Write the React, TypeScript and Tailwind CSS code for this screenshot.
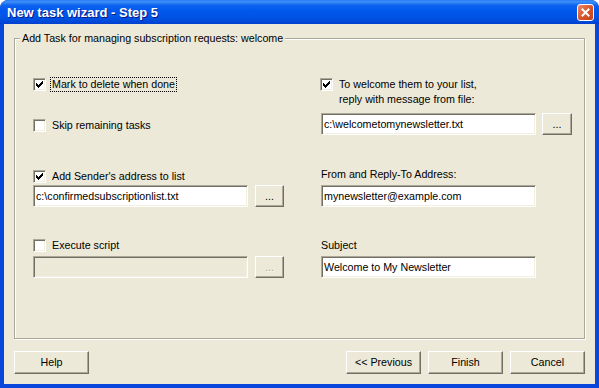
import React from 'react';

const font = "font-['Liberation_Sans',Arial,sans-serif]";

const CheckMark: React.FC = () => (
  <svg width="7" height="7" viewBox="0 0 7 7" shapeRendering="crispEdges" className="block">
    <rect x="6" y="0" width="1" height="1" fill="#000" />
    <rect x="5" y="1" width="2" height="1" fill="#000" />
    <rect x="0" y="2" width="1" height="1" fill="#000" />
    <rect x="4" y="2" width="3" height="1" fill="#000" />
    <rect x="0" y="3" width="2" height="1" fill="#000" />
    <rect x="3" y="3" width="3" height="1" fill="#000" />
    <rect x="0" y="4" width="5" height="1" fill="#000" />
    <rect x="1" y="5" width="3" height="1" fill="#000" />
    <rect x="2" y="6" width="1" height="1" fill="#000" />
  </svg>
);

const CheckBox: React.FC<{ checked?: boolean }> = ({ checked }) => (
  <span className="flex items-center justify-center w-[13px] h-[13px] shrink-0 bg-white border border-t-[#aca899] border-l-[#aca899] border-b-white border-r-white shadow-[inset_1px_1px_0_#716f64,inset_-1px_-1px_0_#f1efe2]">
    {checked && <CheckMark />}
  </span>
);

const TextBox: React.FC<{ value?: string; disabled?: boolean }> = ({ value, disabled }) => (
  <div
    className={`w-[215px] h-[22px] flex items-center pl-[2px] border border-t-[#aca899] border-l-[#aca899] border-b-white border-r-white shadow-[inset_1px_1px_0_#716f64,inset_-1px_-1px_0_#f1efe2] ${
      disabled ? 'bg-[#ece9d8]' : 'bg-white'
    }`}
  >
    <span className="text-black leading-[13px] whitespace-nowrap">{value}</span>
  </div>
);

const Button: React.FC<{ children: React.ReactNode; width?: string; disabled?: boolean; height?: string }> = ({
  children,
  width = 'w-[75px]',
  height = 'h-[23px]',
  disabled,
}) => (
  <div
    className={`${width} ${height} shrink-0 flex items-center justify-center bg-[#ece9d8] border border-t-white border-l-white border-b-[#716f64] border-r-[#716f64] shadow-[inset_-1px_-1px_0_#aca899] ${
      disabled ? 'text-[#aca899] [text-shadow:1px_1px_0_#fff]' : 'text-black'
    }`}
  >
    {children}
  </div>
);

const CheckRow: React.FC<{ checked?: boolean; label: string; focus?: boolean }> = ({ checked, label, focus }) => (
  <div className="flex items-center h-[15px]">
    <CheckBox checked={checked} />
    <span
      className={`ml-[4px] px-[1px] leading-[13px] whitespace-nowrap border border-dotted ${
        focus ? 'border-black' : 'border-transparent'
      }`}
    >
      {label}
    </span>
  </div>
);

const App: React.FC = () => {
  return (
    <div className={`w-[599px] h-[388px] flex flex-col bg-[#0846dc] rounded-t-[8px] overflow-hidden ${font} text-[10.7px] text-black`}>
      <div className="h-[24px] shrink-0 flex items-center justify-between pl-[7px] pr-[5px] rounded-t-[8px] bg-[linear-gradient(to_bottom,#2b7cf5_0%,#3d8ff9_8%,#0d62ee_22%,#0058ee_45%,#0054e6_70%,#0049d8_90%,#0040cc_100%)]">
        <span className="text-white font-bold text-[13px] leading-none [text-shadow:1px_1px_0_#0a1883]">
          New task wizard - Step 5
        </span>
        <div className="w-[17px] h-[17px] rounded-[3px] border border-white flex items-center justify-center bg-[linear-gradient(135deg,#ec8a66_0%,#d9562d_50%,#c4401a_100%)]">
          <svg width="9" height="9" viewBox="0 0 9 9">
            <path d="M1.5 1.5 L7.5 7.5 M7.5 1.5 L1.5 7.5" stroke="#fff" strokeWidth="2" strokeLinecap="square" />
          </svg>
        </div>
      </div>

      <div className="flex-1 flex flex-col mx-[4px] mb-[4px] bg-[#ece9d8] px-[10px] pt-[8px] pb-[10px]">
        <fieldset className="flex-1 border border-[#aca899] shadow-[inset_1px_1px_0_#fff,1px_1px_0_#fff] min-w-0">
          <legend className="ml-[5px] px-[2px] leading-[13px] bg-[#ece9d8]">
            Add Task for managing subscription requests: welcome
          </legend>
          <div className="grid grid-cols-[287px_1fr] pl-[18px] pt-[32px]">
            <div className="flex flex-col">
              <CheckRow checked focus label="Mark to delete when done" />
              <div className="mt-[26px]">
                <CheckRow label="Skip remaining tasks" />
              </div>
              <div className="mt-[36px]">
                <CheckRow checked label="Add Sender's address to list" />
              </div>
              <div className="mt-[1px] flex gap-[7px]">
                <TextBox value="c:\confirmedsubscriptionlist.txt" />
                <Button width="w-[29px]" height="h-[22px]">...</Button>
              </div>
              <div className="mt-[31px]">
                <CheckRow label="Execute script" />
              </div>
              <div className="mt-[3px] flex gap-[7px]">
                <TextBox disabled />
                <Button width="w-[29px]" height="h-[22px]" disabled>...</Button>
              </div>
            </div>

            <div className="flex flex-col">
              <div className="flex items-start">
                <div className="mt-[1px]">
                  <CheckBox checked />
                </div>
                <div className="ml-[6px] leading-[15px]">
                  <div>To welcome them to your list,</div>
                  <div>reply with message from file:</div>
                </div>
              </div>
              <div className="mt-[6px] flex gap-[6px] pl-[1px]">
                <TextBox value="c:\welcometomynewsletter.txt" />
                <Button width="w-[30px]" height="h-[22px]">...</Button>
              </div>
              <div className="mt-[33px] pl-[1px] leading-[13px]">From and Reply-To Address:</div>
              <div className="mt-[4px] pl-[1px]">
                <TextBox value="mynewsletter@example.com" />
              </div>
              <div className="mt-[32px] pl-[1px] leading-[13px]">Subject</div>
              <div className="mt-[4px] pl-[1px]">
                <TextBox value="Welcome to My Newsletter" />
              </div>
            </div>
          </div>
        </fieldset>

        <div className="mt-[12px] flex items-center">
          <Button>Help</Button>
          <div className="ml-auto flex gap-[7px]">
            <Button>&lt;&lt; Previous</Button>
            <Button>Finish</Button>
            <Button>Cancel</Button>
          </div>
        </div>
      </div>
    </div>
  );
};

export default App;
